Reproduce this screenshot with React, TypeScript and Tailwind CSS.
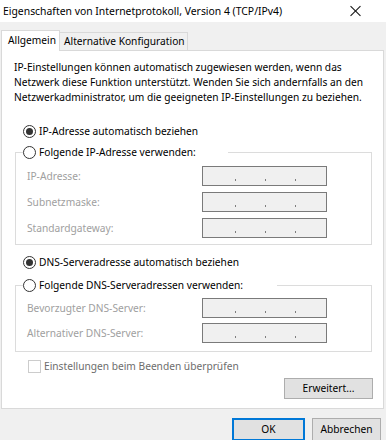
import React from "react";

function Radio({ checked }: { checked?: boolean }) {
  return (
    <span className="w-[13px] h-[13px] rounded-full border border-[#333333] bg-white flex items-center justify-center shrink-0">
      {checked && <span className="w-[7px] h-[7px] rounded-full bg-[#333333]" />}
    </span>
  );
}

function IpField() {
  return (
    <div className="w-[125px] h-[20px] border border-[#7a7a7a] bg-[#f0f0f0] flex items-end pb-[4px]">
      <span className="w-[32px]" />
      <span className="w-[1px] h-[2px] bg-[#7d7d7d]" />
      <span className="w-[29px]" />
      <span className="w-[1px] h-[2px] bg-[#7d7d7d]" />
      <span className="w-[29px]" />
      <span className="w-[1px] h-[2px] bg-[#7d7d7d]" />
    </div>
  );
}

function FieldRow({ label }: { label: string }) {
  return (
    <div className="flex items-center h-[20px] pl-[11px]">
      <span className="w-[175px] text-[#a0a0a0]">{label}</span>
      <IpField />
    </div>
  );
}

export default function App() {
  return (
    <div className="w-[386px] h-[440px] bg-[#f0f0f0] overflow-hidden font-['Noto_Sans',sans-serif] text-[10.2px] leading-[15px] text-black">
      {/* Title bar */}
      <div className="h-[22px] bg-white flex items-center pl-[3px]">
        <span className="text-[10.4px] whitespace-nowrap">Eigenschaften von Internetprotokoll, Version 4 (TCP/IPv4)</span>
        <span className="relative ml-[67px] w-[12px] h-[12px] shrink-0 block">
          <span className="absolute left-[5.5px] top-[-1px] w-[1px] h-[14px] bg-[#111111] rotate-45" />
          <span className="absolute left-[5.5px] top-[-1px] w-[1px] h-[14px] bg-[#111111] -rotate-45" />
        </span>
      </div>

      {/* Tabs */}
      <div className="relative z-10 flex items-end pl-[1px] mt-[8px] h-[21px]">
        <div className="h-[21px] w-[59px] bg-white border border-b-0 border-[#d9d9d9] flex items-center pl-[6px] pb-[1px]">
          Allgemein
        </div>
        <div className="h-[18px] w-[128px] mb-[1px] bg-[#f0f0f0] border border-b-0 border-l-0 border-[#d9d9d9] flex items-center pl-[4px]">
          Alternative Konfiguration
        </div>
      </div>

      {/* Panel */}
      <div className="relative ml-[1px] -mt-[1px] w-[383px] h-[359px] bg-white border border-[#d9d9d9] flex flex-col">
        <p className="mt-[9px] pl-[12px]">
          IP-Einstellungen können automatisch zugewiesen werden, wenn das
          <br />
          Netzwerk diese Funktion unterstützt. Wenden Sie sich andernfalls an den
          <br />
          Netzwerkadministrator, um die geeigneten IP-Einstellungen zu beziehen.
        </p>

        <div className="mt-[18px] h-[16px] pl-[21px] flex items-center gap-[3px]">
          <Radio checked />
          <span>IP-Adresse automatisch beziehen</span>
        </div>

        <fieldset className="mt-[5px] ml-[13px] w-[357px] border border-[#dcdcdc] pb-[6px]">
          <legend className="ml-[7px] h-[16px] w-[205px] flex items-center gap-[3px] bg-white">
            <Radio />
            <span>Folgende IP-Adresse verwenden:</span>
          </legend>
          <div className="mt-[6px] flex flex-col gap-[6px]">
            <FieldRow label="IP-Adresse:" />
            <FieldRow label="Subnetzmaske:" />
            <FieldRow label="Standardgateway:" />
          </div>
        </fieldset>

        <div className="mt-[9px] h-[16px] pl-[21px] flex items-center gap-[3px]">
          <Radio checked />
          <span>DNS-Serveradresse automatisch beziehen</span>
        </div>

        <fieldset className="mt-[7px] ml-[13px] w-[357px] border border-[#dcdcdc] pb-[8px]">
          <legend className="ml-[7px] h-[16px] w-[254px] flex items-center gap-[3px] bg-white">
            <Radio />
            <span>Folgende DNS-Serveradressen verwenden:</span>
          </legend>
          <div className="mt-[5px] flex flex-col gap-[5px]">
            <FieldRow label="Bevorzugter DNS-Server:" />
            <FieldRow label="Alternativer DNS-Server:" />
          </div>
        </fieldset>

        <div className="mt-[6px] h-[16px] pl-[26px] flex items-center gap-[3px]">
          <span className="w-[13px] h-[13px] border border-[#cccccc] bg-white shrink-0" />
          <span className="text-[#6d6d6d]">Einstellungen beim Beenden überprüfen</span>
        </div>

        <div className="mt-[4px] flex justify-end pr-[10px]">
          <div className="w-[89px] h-[21px] bg-[#e1e1e1] border border-[#adadad] flex items-center justify-center">
            Erweitert...
          </div>
        </div>
      </div>

      {/* Bottom buttons */}
      <div className="mt-[9px] flex justify-end gap-[7px] pr-[5px]">
        <div className="w-[73px] h-[23px] bg-[#e1e1e1] border-2 border-[#0078d7] flex items-center justify-center">
          OK
        </div>
        <div className="w-[69px] h-[23px] bg-[#e1e1e1] border border-[#adadad] flex items-center justify-center">
          Abbrechen
        </div>
      </div>
    </div>
  );
}
